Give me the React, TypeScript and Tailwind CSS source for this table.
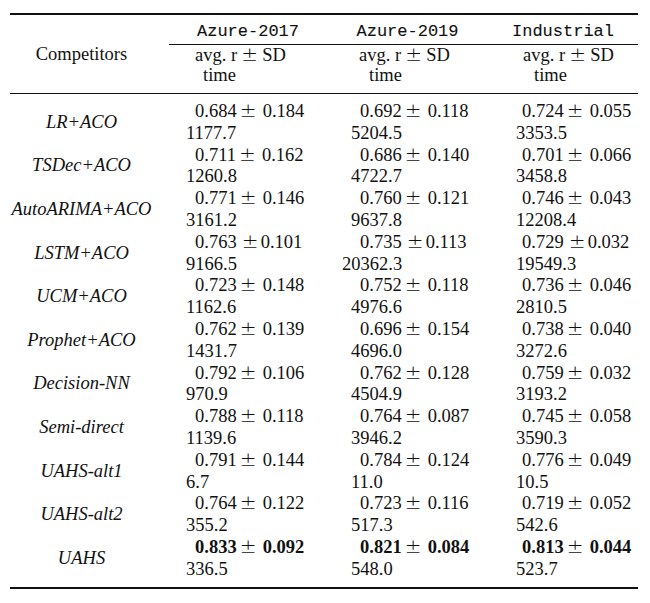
type Val = { a: string; b: string; t: string; tight?: boolean; bold?: boolean; wide?: boolean };
type Row = { name: string; cells: Val[] };

const rows: Row[] = [
  {
    name: "LR+ACO",
    cells: [
      { a: "0.684", b: "0.184", t: "1177.7" },
      { a: "0.692", b: "0.118", t: "5204.5" },
      { a: "0.724", b: "0.055", t: "3353.5" },
    ],
  },
  {
    name: "TSDec+ACO",
    cells: [
      { a: "0.711", b: "0.162", t: "1260.8" },
      { a: "0.686", b: "0.140", t: "4722.7" },
      { a: "0.701", b: "0.066", t: "3458.8" },
    ],
  },
  {
    name: "AutoARIMA+ACO",
    cells: [
      { a: "0.771", b: "0.146", t: "3161.2" },
      { a: "0.760", b: "0.121", t: "9637.8" },
      { a: "0.746", b: "0.043", t: "12208.4" },
    ],
  },
  {
    name: "LSTM+ACO",
    cells: [
      { a: "0.763", b: "0.101", t: "9166.5", tight: true },
      { a: "0.735", b: "0.113", t: "20362.3", tight: true, wide: true },
      { a: "0.729", b: "0.032", t: "19549.3", tight: true },
    ],
  },
  {
    name: "UCM+ACO",
    cells: [
      { a: "0.723", b: "0.148", t: "1162.6" },
      { a: "0.752", b: "0.118", t: "4976.6" },
      { a: "0.736", b: "0.046", t: "2810.5" },
    ],
  },
  {
    name: "Prophet+ACO",
    cells: [
      { a: "0.762", b: "0.139", t: "1431.7" },
      { a: "0.696", b: "0.154", t: "4696.0" },
      { a: "0.738", b: "0.040", t: "3272.6" },
    ],
  },
  {
    name: "Decision-NN",
    cells: [
      { a: "0.792", b: "0.106", t: "970.9" },
      { a: "0.762", b: "0.128", t: "4504.9" },
      { a: "0.759", b: "0.032", t: "3193.2" },
    ],
  },
  {
    name: "Semi-direct",
    cells: [
      { a: "0.788", b: "0.118", t: "1139.6" },
      { a: "0.764", b: "0.087", t: "3946.2" },
      { a: "0.745", b: "0.058", t: "3590.3" },
    ],
  },
  {
    name: "UAHS-alt1",
    cells: [
      { a: "0.791", b: "0.144", t: "6.7" },
      { a: "0.784", b: "0.124", t: "11.0" },
      { a: "0.776", b: "0.049", t: "10.5" },
    ],
  },
  {
    name: "UAHS-alt2",
    cells: [
      { a: "0.764", b: "0.122", t: "355.2" },
      { a: "0.723", b: "0.116", t: "517.3" },
      { a: "0.719", b: "0.052", t: "542.6" },
    ],
  },
  {
    name: "UAHS",
    cells: [
      { a: "0.833", b: "0.092", t: "336.5", bold: true },
      { a: "0.821", b: "0.084", t: "548.0", bold: true },
      { a: "0.813", b: "0.044", t: "523.7", bold: true },
    ],
  },
];

const line1Pad = ["pl-[26px]", "pl-[33px]", "pl-[34px]"];
const line2Pad = ["pl-[17px]", "pl-[24px]", "pl-[28px]"];

// spacing around the plus-minus sign differs a bit between cells
const pmGap = {
  normal: "ml-[3px] mr-[6px]",
  tight: "ml-[5px] mr-[2px]",
  head: "ml-[4px] mr-[4px]",
};

function Pm({ gap }: { gap: keyof typeof pmGap }) {
  return (
    <span className={`${pmGap[gap]} inline-block w-[17px] text-center font-normal`}>
      <span className="font-['DejaVu_Sans',sans-serif] text-[20px] leading-[0] font-extralight">±</span>
    </span>
  );
}

function ValueCell({ v, col }: { v: Val; col: number }) {
  return (
    <div>
      <div className={`${line1Pad[col]} whitespace-nowrap`}>
        <span className={v.bold ? "font-bold" : ""}>{v.a}</span>
        <Pm gap={v.tight ? "tight" : "normal"} />
        <span className={v.bold ? "font-bold" : ""}>{v.b}</span>
      </div>
      <div className={v.wide ? "pl-[15px]" : line2Pad[col]}>{v.t}</div>
    </div>
  );
}

function SubHead({ avg, time }: { avg: string; time: string }) {
  return (
    <div className="leading-[20px]">
      <div className={`${avg} whitespace-nowrap`}>
        avg. r<Pm gap="head" />SD
      </div>
      <div className={time}>time</div>
    </div>
  );
}

const mono = "pt-[6px] text-center leading-[22px] font-['Liberation_Mono',monospace] text-[17px] [-webkit-text-stroke:0.1px_#111]";

export default function App() {
  return (
    <div className="w-[650px] h-[603px] bg-white pt-[13px] px-[10px] font-['Liberation_Serif','Times_New_Roman',serif] text-[18.5px] text-[#111]">
      <div className="w-[628px]">
        <div className="h-[2px] bg-[#111]" />
        <div className="grid grid-cols-[159px_158px_161px_150px]">
          <div className="row-span-3 pt-[28px] pr-[16px] text-center leading-[22px]">Competitors</div>
          <div className={mono}>Azure-2017</div>
          <div className={mono}>Azure-2019</div>
          <div className={mono}>Industrial</div>
          <div className="col-span-3 mt-[1px] h-px bg-[#111]" />
          <SubHead avg="pl-[26px]" time="pl-[34px]" />
          <SubHead avg="pl-[32px]" time="pl-[42px]" />
          <SubHead avg="pl-[35px]" time="pl-[46px]" />
        </div>
        <div className="mt-[8px] h-px bg-[#111]" />
        <div className="pt-[7px]">
          {rows.map((r) => (
            <div key={r.name} className="grid grid-cols-[159px_158px_161px_150px] leading-[21.8px]">
              <div className="flex items-center justify-center pr-[16px] italic">{r.name}</div>
              {r.cells.map((v, i) => (
                <ValueCell key={i} v={v} col={i} />
              ))}
            </div>
          ))}
        </div>
        <div className="mt-[6px] h-[2px] bg-[#111]" />
      </div>
    </div>
  );
}
